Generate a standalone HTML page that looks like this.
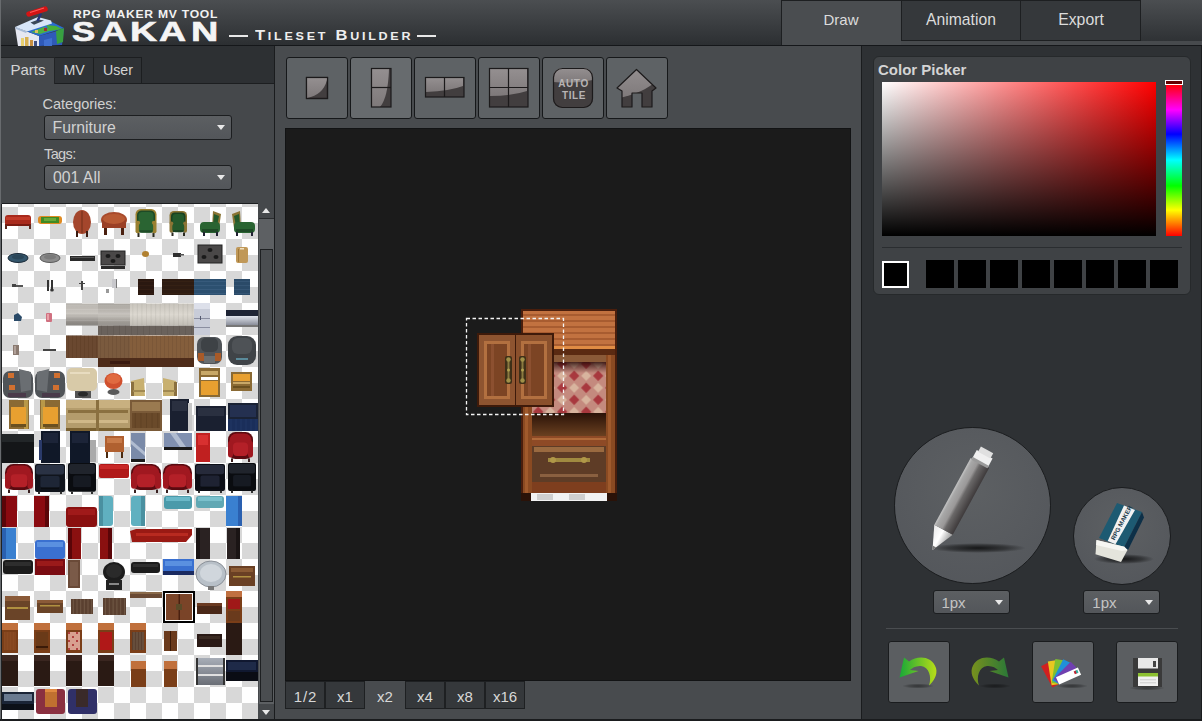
<!DOCTYPE html><html><head><meta charset="utf-8"><style>
*{box-sizing:border-box;margin:0;padding:0}
html,body{width:1202px;height:721px;overflow:hidden;background:#2e3134;font-family:"Liberation Sans",sans-serif;}
.a{position:absolute}
.t{position:absolute;white-space:nowrap;color:#d6d6d6;font-size:14px;line-height:1}
</style></head><body><div class="a" style="left:0px;top:0px;width:1202px;height:45px;background:linear-gradient(#4b4e51,#2c2f32)"></div><div class="a" style="left:0px;top:45px;width:1202px;height:1px;background:#15171a"></div><div class="a" style="left:781px;top:0px;width:120px;height:45px;background:#4a4d50;border-left:1px solid #1d1f21;border-top:1px solid #1d1f21"></div><div class="a" style="left:901px;top:0px;width:120px;height:41px;background:#35383b;border:1px solid #1d1f21"></div><div class="a" style="left:1021px;top:0px;width:120px;height:41px;background:#35383b;border:1px solid #1d1f21;border-left:none"></div><div class="a" style="left:901px;top:41px;width:301px;height:4px;background:#474a4d"></div><div class="t" style="left:781px;top:12.3px;width:120px;text-align:center;font-size:15px;color:#dcdcdc">Draw</div><div class="t" style="left:901px;top:11.7px;width:120px;text-align:center;font-size:15.7px;color:#dcdcdc">Animation</div><div class="t" style="left:1021px;top:11.5px;width:120px;text-align:center;font-size:15.8px;color:#dcdcdc">Export</div><div class="t" style="left:73px;top:9.8px;font-size:10px;font-weight:bold;color:#f2f2f2;letter-spacing:0.6px;transform-origin:0 0;transform:scaleX(1.215)">RPG MAKER MV TOOL</div><div class="t" style="left:72.11px;top:19px;font-size:27px;font-weight:bold;color:#f4f4f4;-webkit-text-stroke:0.6px #f4f4f4;transform-origin:0 0;transform:scaleX(1.29)">S</div><div class="t" style="left:99.51px;top:19px;font-size:27px;font-weight:bold;color:#f4f4f4;-webkit-text-stroke:0.6px #f4f4f4;transform-origin:0 0;transform:scaleX(1.39)">A</div><div class="t" style="left:129.92px;top:19px;font-size:27px;font-weight:bold;color:#f4f4f4;-webkit-text-stroke:0.6px #f4f4f4;transform-origin:0 0;transform:scaleX(1.39)">K</div><div class="t" style="left:159.41px;top:19px;font-size:27px;font-weight:bold;color:#f4f4f4;-webkit-text-stroke:0.6px #f4f4f4;transform-origin:0 0;transform:scaleX(1.39)">A</div><div class="t" style="left:190.5px;top:19px;font-size:27px;font-weight:bold;color:#f4f4f4;-webkit-text-stroke:0.6px #f4f4f4;transform-origin:0 0;transform:scaleX(1.4)">N</div><div class="a" style="left:229px;top:35px;width:19px;height:1.5px;background:#e8e8e8"></div><div class="t" style="left:255px;top:28px;font-size:14.5px;font-weight:bold;color:#eeeeee;letter-spacing:2.4px;transform-origin:0 0;transform:scaleX(1.14)">T<span style="font-size:11px">ILESET</span> B<span style="font-size:11px">UILDER</span></div><div class="a" style="left:417px;top:35px;width:19px;height:1.5px;background:#e8e8e8"></div><svg class="a" style="left:0;top:0" width="70" height="46" viewBox="0 0 70 46"><polygon points="39,36 64,29 62,45 39,46" fill="#2f5ab8"/><polygon points="56,31 64,28 63,42 57,44" fill="#38a040"/><polygon points="44,40 52,38 52,46 44,46" fill="#4070d0"/><polygon points="15,27 39,36 39,46 18,46" fill="#e6e8f2"/><rect x="21" y="38" width="3" height="8" fill="#e8d070"/><rect x="25" y="37" width="3.5" height="9" fill="#d8b050"/><rect x="30" y="40" width="3" height="6" fill="#c89040"/><rect x="34" y="41" width="3" height="5" fill="#405080"/><polygon points="26,31 52,22 64,28 39,36" fill="#2a6cd0"/><polygon points="31,32 44,27 52,30 40,34" fill="#50b040"/><polygon points="46,25 56,26 62,29 50,31" fill="#48b038"/><rect x="44" y="28" width="3" height="3" fill="#a03030"/><rect x="35" y="30" width="3" height="3" fill="#d8c060"/><polygon points="15,27 38,17 51,20.5 52,23.5 27,31.5" fill="#d8e6f8"/><polygon points="15,27 27,31.5 26,33 16,29" fill="#a8bcd8"/><polygon points="30.5,22.5 38.5,19.5 44,20.5 34,24.8" fill="#3a4858"/><line x1="41" y1="13.5" x2="37.5" y2="21" stroke="#26347a" stroke-width="2.5"/><line x1="29" y1="14" x2="45" y2="9" stroke="#d41414" stroke-width="5.5" stroke-linecap="round"/><line x1="30" y1="12.5" x2="44" y2="8" stroke="#ff5a5a" stroke-width="1.2"/></svg><div class="a" style="left:0px;top:0px;width:1px;height:721px;background:#686b6e"></div><div class="a" style="left:1px;top:46px;width:273px;height:38px;background:#2d3033"></div><div class="a" style="left:1px;top:83px;width:273px;height:1px;background:#1c1e20"></div><div class="a" style="left:1px;top:84px;width:273px;height:637px;background:#45484b"></div><div class="a" style="left:1px;top:57px;width:54px;height:27px;background:#45484b;border-top:1px solid #222426;border-right:1px solid #222426"></div><div class="a" style="left:55px;top:57px;width:39px;height:27px;background:#2f3235;border:1px solid #1c1e20;border-left:none"></div><div class="a" style="left:94px;top:57px;width:48px;height:27px;background:#2f3235;border:1px solid #1c1e20;border-left:none"></div><div class="t" style="left:10.5px;top:62.3px;font-size:15px;color:#d4d4d4">Parts</div><div class="t" style="left:63.5px;top:62.8px;font-size:14.2px;color:#d4d4d4">MV</div><div class="t" style="left:103px;top:62.8px;font-size:14.2px;color:#d4d4d4">User</div><div class="t" style="left:42.5px;top:96.9px;font-size:14.5px;color:#d0d0d0">Categories:</div><div class="t" style="left:44px;top:146.9px;font-size:14.5px;color:#d0d0d0;letter-spacing:-0.6px">Tags:</div><div class="a" style="left:44px;top:115px;width:188px;height:25px;background:linear-gradient(#5c5f62,#53565a);border:1px solid #1c1e20;border-radius:3px"></div><div class="t" style="left:52.5px;top:119.9px;font-size:15.8px;color:#d2d2d2">Furniture</div><div class="a" style="left:217px;top:125px;width:0;height:0;border-left:4px solid transparent;border-right:4px solid transparent;border-top:5px solid #e8e8e8"></div><div class="a" style="left:44px;top:165px;width:188px;height:25px;background:linear-gradient(#5c5f62,#53565a);border:1px solid #1c1e20;border-radius:3px"></div><div class="t" style="left:53px;top:169.9px;font-size:15.8px;color:#d2d2d2">001 All</div><div class="a" style="left:217px;top:175px;width:0;height:0;border-left:4px solid transparent;border-right:4px solid transparent;border-top:5px solid #e8e8e8"></div><div class="a" style="left:2px;top:204px;width:256px;height:515px;background:conic-gradient(#fff 25%,#d8d8d8 0 50%,#fff 0 75%,#d8d8d8 0);background-size:32px 32px;background-position:0 3px"></div><svg class="a" style="left:2px;top:204px" width="256" height="515" viewBox="2 204 256 515"><defs><linearGradient id="pg1" x1="0" y1="0" x2="0" y2="1"><stop offset="0" stop-color="#b8b4ae"/><stop offset="0.45" stop-color="#c8c4be"/><stop offset="1" stop-color="#7c7874"/></linearGradient><linearGradient id="pg2" x1="0" y1="0" x2="0" y2="1"><stop offset="0" stop-color="#a8a49e"/><stop offset="0.5" stop-color="#c4c0ba"/><stop offset="1" stop-color="#8e8a84"/></linearGradient><linearGradient id="pg3" x1="0" y1="0" x2="0" y2="1"><stop offset="0" stop-color="#c8c4bc"/><stop offset="0.5" stop-color="#dcd8d0"/><stop offset="1" stop-color="#c0bcb4"/></linearGradient><linearGradient id="pg4" x1="0" y1="0" x2="0" y2="1"><stop offset="0" stop-color="#e0e4ec"/><stop offset="1" stop-color="#8a8e9a"/></linearGradient><linearGradient id="pg5" x1="0" y1="0" x2="0" y2="1"><stop offset="0" stop-color="#a8aeb8"/><stop offset="1" stop-color="#6a6e76"/></linearGradient></defs><rect x="5" y="215" width="26" height="11" rx="3" fill="#a82a1c" /><rect x="6" y="217" width="24" height="3" fill="#c23a28" /><rect x="5" y="224" width="26" height="2" fill="#7a1a10" /><rect x="5" y="225" width="2" height="4" fill="#5a2a20" /><rect x="29" y="225" width="2" height="4" fill="#5a2a20" /><rect x="38" y="216" width="24" height="8" rx="3" fill="#e08a20" /><rect x="41" y="217" width="18" height="6" fill="#3f8a24" /><rect x="44" y="218" width="12" height="3" fill="#6aa838" /><ellipse cx="82" cy="222" rx="9" ry="12" fill="#a4462c" /><rect x="81" y="211" width="2" height="22" fill="#8a3a22" /><rect x="76" y="231" width="2" height="6" fill="#3a1a10" /><rect x="86" y="231" width="2" height="6" fill="#3a1a10" /><ellipse cx="114" cy="220" rx="13" ry="8" fill="#a84a2c" /><rect x="102" y="220" width="24" height="8" fill="#9a4026" /><ellipse cx="114" cy="219" rx="11" ry="5" fill="#b85a34" /><rect x="104" y="228" width="3" height="7" fill="#4a2010" /><rect x="121" y="228" width="3" height="7" fill="#4a2010" /><rect x="135.5" y="209" width="21" height="17.36" rx="5.25" fill="#9a8030" /><rect x="137.0" y="210.5" width="18" height="16.24" rx="4.62" fill="#1e4a26" /><rect x="138.5" y="212" width="15" height="12.6" rx="3.78" fill="#2a6432" /><rect x="135.5" y="220.76" width="4.62" height="12.6" rx="2" fill="#9a8030" /><rect x="151.88" y="220.76" width="4.62" height="12.6" rx="2" fill="#9a8030" /><rect x="138.86" y="223.0" width="14.280000000000001" height="9.799999999999999" rx="3" fill="#2a6432" /><rect x="139.7" y="230.28" width="12.6" height="2.24" fill="#1e4a26" /><rect x="137.5" y="233.07999999999998" width="2" height="3.9200000000000004" fill="#2a2a20" /><rect x="152.5" y="233.07999999999998" width="2" height="3.9200000000000004" fill="#2a2a20" /><rect x="169.5" y="211" width="17.5" height="15.5" rx="4.375" fill="#8a7434" /><rect x="171.0" y="212.5" width="14.5" height="14.499999999999998" rx="3.85" fill="#1a4222" /><rect x="172.5" y="214" width="11.5" height="11.25" rx="3.15" fill="#245a2c" /><rect x="169.5" y="221.5" width="3.85" height="11.25" rx="2" fill="#8a7434" /><rect x="183.15" y="221.5" width="3.85" height="11.25" rx="2" fill="#8a7434" /><rect x="172.3" y="223.5" width="11.9" height="8.75" rx="3" fill="#245a2c" /><rect x="173.0" y="230.0" width="10.5" height="2.0" fill="#1a4222" /><rect x="171.5" y="232.5" width="2" height="3.5000000000000004" fill="#2a2a20" /><rect x="183.0" y="232.5" width="2" height="3.5000000000000004" fill="#2a2a20" /><polygon points="213,211 221,214 219,228 212,228" fill="#8a7434" /><polygon points="214,214 219,216 217,226 213,226" fill="#245a2c" /><rect x="200" y="222" width="20" height="11" rx="4" fill="#2a6432" /><rect x="202" y="229" width="16" height="3" fill="#1e4a26" /><rect x="203" y="232" width="2" height="4" fill="#223" /><rect x="216" y="232" width="2" height="4" fill="#223" /><polygon points="240,211 232,214 234,228 241,228" fill="#8a7434" /><polygon points="239,214 234,216 236,226 240,226" fill="#245a2c" /><rect x="234" y="222" width="21" height="11" rx="4" fill="#2a6432" /><rect x="236" y="229" width="17" height="3" fill="#1e4a26" /><rect x="236" y="232" width="2" height="4" fill="#223" /><rect x="251" y="232" width="2" height="4" fill="#223" /><ellipse cx="18" cy="258" rx="10" ry="4.5" fill="#34566c" stroke="#1a2a38" stroke-width="1"/><ellipse cx="18" cy="257" rx="6" ry="2.5" fill="#2a4658" /><ellipse cx="50" cy="258" rx="10" ry="4.5" fill="#8c8c8c" stroke="#5a5a5a" stroke-width="1"/><ellipse cx="50" cy="257" rx="6" ry="2.5" fill="#7a7a7a" /><rect x="70" y="256" width="25" height="5" fill="#2a2a2a" /><rect x="71" y="257" width="23" height="1" fill="#555" /><rect x="101" y="251" width="24" height="14" fill="#4a4848" stroke="#222" stroke-width="1"/><rect x="101" y="266" width="24" height="3" fill="#2a2a2a" /><ellipse cx="108" cy="256" rx="2.5" ry="2" fill="#1a1a1a" /><ellipse cx="118" cy="256" rx="2.5" ry="2" fill="#1a1a1a" /><ellipse cx="113" cy="261" rx="2.5" ry="2" fill="#1a1a1a" /><ellipse cx="145.5" cy="254" rx="3.5" ry="3" fill="#b08030" /><rect x="173" y="253" width="8" height="4" fill="#303030" /><rect x="180" y="254" width="4" height="1.5" fill="#555" /><rect x="198" y="245" width="24" height="18" fill="#4a4848" stroke="#222" stroke-width="1"/><ellipse cx="210" cy="250" rx="2.5" ry="2" fill="#1a1a1a" /><ellipse cx="204" cy="257" rx="2.5" ry="2" fill="#1a1a1a" /><ellipse cx="216" cy="257" rx="2.5" ry="2" fill="#1a1a1a" /><rect x="236" y="247" width="12" height="16" rx="2" fill="#c09858" /><rect x="240" y="248" width="4" height="1.5" fill="#f0e0c0" /><rect x="238" y="249" width="1" height="13" fill="#a07838" /><rect x="13" y="285" width="10" height="2" fill="#555" /><rect x="12" y="284" width="4" height="3" fill="#444" /><rect x="47" y="280" width="2" height="11" fill="#333" /><rect x="51" y="280" width="2" height="11" fill="#333" /><ellipse cx="52" cy="290" rx="1.8" ry="1.5" fill="#333" /><rect x="81" y="281" width="2" height="9" fill="#444" /><rect x="79" y="283" width="6" height="1" fill="#444" /><rect x="112" y="279" width="5" height="9" fill="#c8c8cc" /><rect x="116" y="279" width="1" height="9" fill="#777" /><rect x="106" y="289" width="3" height="4" fill="#999" /><rect x="138" y="279" width="16" height="16" fill="#2a1810" /><rect x="138" y="281.0" width="16" height="1" fill="#5a3a20" opacity="0.175"/><rect x="138" y="285.0" width="16" height="1" fill="#5a3a20" opacity="0.175"/><rect x="138" y="289.0" width="16" height="1" fill="#5a3a20" opacity="0.175"/><rect x="138" y="293.0" width="16" height="1" fill="#5a3a20" opacity="0.175"/><rect x="162" y="279" width="32" height="16" fill="#2e1c12" /><rect x="162" y="281.0" width="32" height="1" fill="#5a3a22" opacity="0.175"/><rect x="162" y="285.0" width="32" height="1" fill="#5a3a22" opacity="0.175"/><rect x="162" y="289.0" width="32" height="1" fill="#5a3a22" opacity="0.175"/><rect x="162" y="293.0" width="32" height="1" fill="#5a3a22" opacity="0.175"/><rect x="194" y="279" width="32" height="16" fill="#2c5070" /><rect x="194" y="281.0" width="32" height="1" fill="#6a90b0" opacity="0.175"/><rect x="194" y="285.0" width="32" height="1" fill="#6a90b0" opacity="0.175"/><rect x="194" y="289.0" width="32" height="1" fill="#6a90b0" opacity="0.175"/><rect x="194" y="293.0" width="32" height="1" fill="#6a90b0" opacity="0.175"/><rect x="234" y="279" width="16" height="16" fill="#2a4a68" /><rect x="234" y="281.0" width="16" height="1" fill="#6a90b0" opacity="0.175"/><rect x="234" y="285.0" width="16" height="1" fill="#6a90b0" opacity="0.175"/><rect x="234" y="289.0" width="16" height="1" fill="#6a90b0" opacity="0.175"/><rect x="234" y="293.0" width="16" height="1" fill="#6a90b0" opacity="0.175"/><polygon points="14,315 18,313 22,317 21,321 14,321" fill="#2a4a68" /><rect x="46" y="313" width="6" height="9" rx="1" fill="#d07080" /><rect x="47" y="314" width="2" height="6" fill="#e8a0a8" /><rect x="66" y="303.5" width="32" height="22" fill="url(#pg1)" /><rect x="66" y="305.3" width="32" height="1" fill="#ffffff" opacity="0.1"/><rect x="66" y="309.0" width="32" height="1" fill="#ffffff" opacity="0.1"/><rect x="66" y="312.7" width="32" height="1" fill="#ffffff" opacity="0.1"/><rect x="66" y="316.3" width="32" height="1" fill="#ffffff" opacity="0.1"/><rect x="66" y="320.0" width="32" height="1" fill="#ffffff" opacity="0.1"/><rect x="66" y="323.7" width="32" height="1" fill="#ffffff" opacity="0.1"/><rect x="98" y="303.5" width="32" height="22" fill="url(#pg2)" /><rect x="98" y="305.3" width="32" height="1" fill="#ffffff" opacity="0.1"/><rect x="98" y="309.0" width="32" height="1" fill="#ffffff" opacity="0.1"/><rect x="98" y="312.7" width="32" height="1" fill="#ffffff" opacity="0.1"/><rect x="98" y="316.3" width="32" height="1" fill="#ffffff" opacity="0.1"/><rect x="98" y="320.0" width="32" height="1" fill="#ffffff" opacity="0.1"/><rect x="98" y="323.7" width="32" height="1" fill="#ffffff" opacity="0.1"/><rect x="98" y="325.5" width="96" height="9.5" fill="#6a625c" /><rect x="101.0" y="325.5" width="1" height="9.5" fill="#3a3430" opacity="0.15"/><rect x="107.0" y="325.5" width="1" height="9.5" fill="#3a3430" opacity="0.15"/><rect x="113.0" y="325.5" width="1" height="9.5" fill="#3a3430" opacity="0.15"/><rect x="119.0" y="325.5" width="1" height="9.5" fill="#3a3430" opacity="0.15"/><rect x="125.0" y="325.5" width="1" height="9.5" fill="#3a3430" opacity="0.15"/><rect x="131.0" y="325.5" width="1" height="9.5" fill="#3a3430" opacity="0.15"/><rect x="137.0" y="325.5" width="1" height="9.5" fill="#3a3430" opacity="0.15"/><rect x="143.0" y="325.5" width="1" height="9.5" fill="#3a3430" opacity="0.15"/><rect x="149.0" y="325.5" width="1" height="9.5" fill="#3a3430" opacity="0.15"/><rect x="155.0" y="325.5" width="1" height="9.5" fill="#3a3430" opacity="0.15"/><rect x="161.0" y="325.5" width="1" height="9.5" fill="#3a3430" opacity="0.15"/><rect x="167.0" y="325.5" width="1" height="9.5" fill="#3a3430" opacity="0.15"/><rect x="173.0" y="325.5" width="1" height="9.5" fill="#3a3430" opacity="0.15"/><rect x="179.0" y="325.5" width="1" height="9.5" fill="#3a3430" opacity="0.15"/><rect x="185.0" y="325.5" width="1" height="9.5" fill="#3a3430" opacity="0.15"/><rect x="191.0" y="325.5" width="1" height="9.5" fill="#3a3430" opacity="0.15"/><rect x="130" y="303.5" width="64" height="22" fill="url(#pg3)" /><rect x="132.3" y="303.5" width="1" height="22" fill="#8a8680" opacity="0.15"/><rect x="136.9" y="303.5" width="1" height="22" fill="#8a8680" opacity="0.15"/><rect x="141.4" y="303.5" width="1" height="22" fill="#8a8680" opacity="0.15"/><rect x="146.0" y="303.5" width="1" height="22" fill="#8a8680" opacity="0.15"/><rect x="150.6" y="303.5" width="1" height="22" fill="#8a8680" opacity="0.15"/><rect x="155.1" y="303.5" width="1" height="22" fill="#8a8680" opacity="0.15"/><rect x="159.7" y="303.5" width="1" height="22" fill="#8a8680" opacity="0.15"/><rect x="164.3" y="303.5" width="1" height="22" fill="#8a8680" opacity="0.15"/><rect x="168.9" y="303.5" width="1" height="22" fill="#8a8680" opacity="0.15"/><rect x="173.4" y="303.5" width="1" height="22" fill="#8a8680" opacity="0.15"/><rect x="178.0" y="303.5" width="1" height="22" fill="#8a8680" opacity="0.15"/><rect x="182.6" y="303.5" width="1" height="22" fill="#8a8680" opacity="0.15"/><rect x="187.1" y="303.5" width="1" height="22" fill="#8a8680" opacity="0.15"/><rect x="191.7" y="303.5" width="1" height="22" fill="#8a8680" opacity="0.15"/><rect x="194" y="303" width="16" height="32" fill="#c8ccd8" /><rect x="194" y="303" width="16" height="6" fill="#dde0ea" /><rect x="194" y="318" width="16" height="1" fill="#8a8ea0" /><rect x="194" y="327" width="16" height="1" fill="#8a8ea0" /><rect x="200" y="316" width="1" height="4" fill="#555a70" /><rect x="226" y="310" width="32" height="6" fill="#1e2434" /><rect x="226" y="316" width="32" height="9" fill="url(#pg4)" /><rect x="226" y="325" width="32" height="2" fill="#777" /><rect x="13" y="345" width="6" height="10" fill="#8a7a70" /><rect x="14" y="346" width="2" height="8" fill="#b0a098" /><rect x="43" y="349" width="13" height="2" fill="#444" /><rect x="66" y="335.5" width="32" height="22.5" fill="#6a4830" /><rect x="68.0" y="335.5" width="1" height="22.5" fill="#3a2410" opacity="0.15"/><rect x="72.0" y="335.5" width="1" height="22.5" fill="#3a2410" opacity="0.15"/><rect x="76.0" y="335.5" width="1" height="22.5" fill="#3a2410" opacity="0.15"/><rect x="80.0" y="335.5" width="1" height="22.5" fill="#3a2410" opacity="0.15"/><rect x="84.0" y="335.5" width="1" height="22.5" fill="#3a2410" opacity="0.15"/><rect x="88.0" y="335.5" width="1" height="22.5" fill="#3a2410" opacity="0.15"/><rect x="92.0" y="335.5" width="1" height="22.5" fill="#3a2410" opacity="0.15"/><rect x="96.0" y="335.5" width="1" height="22.5" fill="#3a2410" opacity="0.15"/><rect x="98" y="335.5" width="32" height="22.5" fill="#7a5a3e" /><rect x="100.0" y="335.5" width="1" height="22.5" fill="#4a3020" opacity="0.15"/><rect x="104.0" y="335.5" width="1" height="22.5" fill="#4a3020" opacity="0.15"/><rect x="108.0" y="335.5" width="1" height="22.5" fill="#4a3020" opacity="0.15"/><rect x="112.0" y="335.5" width="1" height="22.5" fill="#4a3020" opacity="0.15"/><rect x="116.0" y="335.5" width="1" height="22.5" fill="#4a3020" opacity="0.15"/><rect x="120.0" y="335.5" width="1" height="22.5" fill="#4a3020" opacity="0.15"/><rect x="124.0" y="335.5" width="1" height="22.5" fill="#4a3020" opacity="0.15"/><rect x="128.0" y="335.5" width="1" height="22.5" fill="#4a3020" opacity="0.15"/><rect x="130" y="335.5" width="64" height="22.5" fill="#845e3c" /><rect x="132.0" y="335.5" width="1" height="22.5" fill="#4a3020" opacity="0.15"/><rect x="136.0" y="335.5" width="1" height="22.5" fill="#4a3020" opacity="0.15"/><rect x="140.0" y="335.5" width="1" height="22.5" fill="#4a3020" opacity="0.15"/><rect x="144.0" y="335.5" width="1" height="22.5" fill="#4a3020" opacity="0.15"/><rect x="148.0" y="335.5" width="1" height="22.5" fill="#4a3020" opacity="0.15"/><rect x="152.0" y="335.5" width="1" height="22.5" fill="#4a3020" opacity="0.15"/><rect x="156.0" y="335.5" width="1" height="22.5" fill="#4a3020" opacity="0.15"/><rect x="160.0" y="335.5" width="1" height="22.5" fill="#4a3020" opacity="0.15"/><rect x="164.0" y="335.5" width="1" height="22.5" fill="#4a3020" opacity="0.15"/><rect x="168.0" y="335.5" width="1" height="22.5" fill="#4a3020" opacity="0.15"/><rect x="172.0" y="335.5" width="1" height="22.5" fill="#4a3020" opacity="0.15"/><rect x="176.0" y="335.5" width="1" height="22.5" fill="#4a3020" opacity="0.15"/><rect x="180.0" y="335.5" width="1" height="22.5" fill="#4a3020" opacity="0.15"/><rect x="184.0" y="335.5" width="1" height="22.5" fill="#4a3020" opacity="0.15"/><rect x="188.0" y="335.5" width="1" height="22.5" fill="#4a3020" opacity="0.15"/><rect x="192.0" y="335.5" width="1" height="22.5" fill="#4a3020" opacity="0.15"/><rect x="98" y="358" width="96" height="9" fill="#4e2c1a" /><rect x="110" y="361" width="20" height="3" fill="#3a1a10" /><rect x="197" y="337" width="25" height="27" rx="7" fill="#505458" /><rect x="201" y="338" width="17" height="14" rx="5" fill="#3e4246" /><rect x="198" y="353" width="6" height="8" fill="#a85a28" /><rect x="215" y="353" width="6" height="8" fill="#a85a28" /><rect x="204" y="356" width="11" height="7" fill="#6a6e70" /><rect x="228" y="336" width="28" height="29" rx="9" fill="#404448" /><rect x="232" y="338" width="20" height="16" rx="6" fill="#4e5256" /><rect x="236" y="358" width="12" height="2" fill="#5a8a9a" /><rect x="3" y="371" width="30" height="27" rx="7" fill="#505458" /><polygon points="19,369 31,372 31,390 21,392" fill="#6a6e72" /><rect x="8" y="373" width="6" height="5" fill="#d07030" /><rect x="9" y="385" width="6" height="5" fill="#d07030" /><rect x="8" y="393" width="18" height="4" fill="#4a3a4a" /><rect x="35" y="371" width="30" height="27" rx="7" fill="#505458" /><polygon points="49,369 37,372 37,390 47,392" fill="#6a6e72" /><rect x="54" y="373" width="6" height="5" fill="#d07030" /><rect x="53" y="385" width="6" height="5" fill="#d07030" /><rect x="42" y="393" width="18" height="4" fill="#4a3a4a" /><rect x="67" y="368" width="30" height="23" rx="5" fill="#d8caa8" /><rect x="70" y="372" width="20" height="2" fill="#e8dcc0" /><rect x="75" y="391" width="16" height="7" fill="#555" /><ellipse cx="83" cy="394" rx="5" ry="2.5" fill="#2a2a2a" /><ellipse cx="113.5" cy="381" rx="9" ry="8" fill="#d0502e" /><ellipse cx="113.5" cy="379" rx="7" ry="5" fill="#e06a40" /><ellipse cx="113.5" cy="392" rx="6" ry="3" fill="#5a5a5a" /><polygon points="131,381 144,378 145,396 131,396" fill="#c8b070" /><rect x="131" y="382" width="3" height="14" fill="#8a7040" /><rect x="133" y="390" width="12" height="2" fill="#a08850" /><polygon points="176,381 163,378 163,396 176,396" fill="#c8b070" /><rect x="174" y="382" width="3" height="14" fill="#8a7040" /><rect x="163" y="390" width="12" height="2" fill="#a08850" /><rect x="199" y="368" width="21" height="29" fill="#8a6a34" /><rect x="201" y="371" width="17" height="4" fill="#c8a868" /><rect x="201" y="377" width="17" height="3" fill="#fff" /><rect x="201" y="381" width="17" height="14" fill="#e8a030" /><rect x="231" y="372" width="21" height="19" fill="#8a6a34" /><rect x="233" y="374" width="17" height="7" fill="#e8a030" /><rect x="233" y="382" width="17" height="2" fill="#c8a868" /><rect x="233" y="386" width="17" height="2" fill="#6a5020" /><rect x="9" y="400" width="20" height="29" fill="#8a6a34" /><rect x="24" y="400" width="4" height="29" fill="#b89848" /><rect x="11" y="407" width="15" height="17" fill="#e8a030" /><rect x="11" y="424" width="15" height="3" fill="#6a5020" /><rect x="40" y="400" width="20" height="29" fill="#8a6a34" /><rect x="41" y="400" width="4" height="29" fill="#b89848" /><rect x="43" y="407" width="15" height="17" fill="#e8a030" /><rect x="43" y="424" width="15" height="3" fill="#6a5020" /><rect x="66" y="400" width="64" height="31" fill="#b49c6c" /><rect x="66" y="400" width="64" height="8" fill="#c8b080" /><rect x="68" y="410" width="60" height="3" fill="#8a7040" /><rect x="68" y="420" width="60" height="3" fill="#d0b888" /><rect x="66" y="428" width="64" height="3" fill="#7a6030" /><rect x="96" y="400" width="3" height="31" fill="#8a7040" /><rect x="130" y="400" width="32" height="31" fill="#7a5a38" /><rect x="132" y="402" width="28" height="9" fill="#9a7a50" /><rect x="132" y="413" width="28" height="15" fill="#6a4a2a" /><rect x="134.8" y="413" width="1" height="15" fill="#3a2210" opacity="0.2"/><rect x="140.4" y="413" width="1" height="15" fill="#3a2210" opacity="0.2"/><rect x="146.0" y="413" width="1" height="15" fill="#3a2210" opacity="0.2"/><rect x="151.6" y="413" width="1" height="15" fill="#3a2210" opacity="0.2"/><rect x="157.2" y="413" width="1" height="15" fill="#3a2210" opacity="0.2"/><rect x="170" y="399" width="19" height="32" fill="#1a2030" /><rect x="172" y="401" width="15" height="10" fill="#2a3040" /><rect x="188" y="403" width="4" height="28" fill="#c8c8c8" /><rect x="196" y="406" width="30" height="25" fill="#1a2030" /><rect x="198" y="408" width="26" height="8" fill="#2a3040" /><rect x="228" y="403" width="30" height="28" fill="#1a2234" /><rect x="230" y="405" width="26" height="12" fill="#243050" /><rect x="228" y="419" width="30" height="12" fill="#1a2e5a" /><rect x="230.5" y="419" width="1" height="12" fill="#4a6aaa" opacity="0.15"/><rect x="235.5" y="419" width="1" height="12" fill="#4a6aaa" opacity="0.15"/><rect x="240.5" y="419" width="1" height="12" fill="#4a6aaa" opacity="0.15"/><rect x="245.5" y="419" width="1" height="12" fill="#4a6aaa" opacity="0.15"/><rect x="250.5" y="419" width="1" height="12" fill="#4a6aaa" opacity="0.15"/><rect x="255.5" y="419" width="1" height="12" fill="#4a6aaa" opacity="0.15"/><rect x="2" y="434" width="32" height="29" fill="#141618" /><rect x="2" y="434" width="32" height="8" fill="#222628" /><rect x="41" y="431" width="19" height="32" fill="#101828" /><rect x="39" y="440" width="3" height="20" fill="#2a3a6a" /><rect x="43" y="433" width="15" height="10" fill="#1c2438" /><rect x="70" y="431" width="20" height="32" fill="#101828" /><rect x="72" y="433" width="16" height="10" fill="#1c2438" /><rect x="90" y="440" width="6" height="22" fill="#aaaaaa" /><rect x="105" y="436" width="19" height="16" fill="#b06030" /><rect x="107" y="438" width="15" height="5" fill="#c87a48" /><rect x="106" y="452" width="2" height="6" fill="#4a2a10" /><rect x="121" y="452" width="2" height="6" fill="#4a2a10" /><rect x="131" y="433" width="14" height="29" fill="#7a8aa8" /><polygon points="131,440 145,452 145,456 131,444" fill="#b0bcd0" /><rect x="131" y="459" width="14" height="3" fill="#1a1a1a" /><rect x="164" y="433" width="28" height="14" fill="#8090b0" /><polygon points="170,433 176,433 186,447 180,447" fill="#b0bcd0" /><rect x="164" y="447" width="28" height="3" fill="#1a1a1a" /><rect x="196" y="433" width="14" height="29" fill="#c02020" /><rect x="198" y="435" width="10" height="10" fill="#d83030" /><rect x="228" y="432" width="25" height="27.0" rx="7.5" fill="#5a0a10" /><rect x="229.5" y="433.5" width="22" height="16.5" rx="7.000000000000001" fill="#a01820" /><rect x="233.0" y="442.5" width="15.0" height="13.5" rx="4" fill="#b42028" /><rect x="228" y="441.0" width="5.0" height="16.5" rx="3" fill="#a01820" /><rect x="248.0" y="441.0" width="5.0" height="16.5" rx="3" fill="#a01820" /><rect x="231" y="458.4" width="2" height="3.5999999999999996" fill="#3a2020" /><rect x="248" y="458.4" width="2" height="3.5999999999999996" fill="#3a2020" /><rect x="5" y="464" width="28" height="26.1" rx="8.4" fill="#5a0a10" /><rect x="6.5" y="465.5" width="25" height="15.950000000000001" rx="7.840000000000001" fill="#a01820" /><rect x="10.600000000000001" y="474.15" width="16.8" height="13.05" rx="4" fill="#b42028" /><rect x="5" y="472.7" width="5.6000000000000005" height="15.950000000000001" rx="3" fill="#a01820" /><rect x="27.400000000000002" y="472.7" width="5.6000000000000005" height="15.950000000000001" rx="3" fill="#a01820" /><rect x="8" y="489.52" width="2" height="3.48" fill="#3a2020" /><rect x="28" y="489.52" width="2" height="3.48" fill="#3a2020" /><rect x="35" y="464" width="30" height="27.900000000000002" rx="2" fill="#10141c" /><rect x="36" y="465" width="28" height="9.6" rx="2" fill="#2a3244" /><rect x="40.4" y="476.0" width="19.2" height="12.0" rx="2" fill="#1e2636" /><rect x="41.0" y="487.4" width="18.0" height="1.7999999999999998" fill="#0a0c10" /><rect x="38" y="491.6" width="2" height="2.4" fill="#333" /><rect x="60" y="491.6" width="2" height="2.4" fill="#333" /><rect x="68" y="463" width="28" height="28.830000000000002" rx="2" fill="#0a0c10" /><rect x="69" y="464" width="26" height="9.92" rx="2" fill="#20242c" /><rect x="73.04" y="475.4" width="17.92" height="12.4" rx="2" fill="#161a22" /><rect x="73.6" y="487.18" width="16.8" height="1.8599999999999999" fill="#0a0c10" /><rect x="71" y="491.52" width="2" height="2.48" fill="#333" /><rect x="91" y="491.52" width="2" height="2.48" fill="#333" /><rect x="99" y="464" width="30" height="14" rx="2" fill="#b01818" /><rect x="100" y="465" width="28" height="4" fill="#c82828" /><rect x="131" y="464" width="30" height="26.1" rx="9.0" fill="#5a0a10" /><rect x="132.5" y="465.5" width="27" height="15.950000000000001" rx="8.4" fill="#a01820" /><rect x="137.0" y="474.15" width="18.0" height="13.05" rx="4" fill="#b42028" /><rect x="131" y="472.7" width="6.0" height="15.950000000000001" rx="3" fill="#a01820" /><rect x="155.0" y="472.7" width="6.0" height="15.950000000000001" rx="3" fill="#a01820" /><rect x="134" y="489.52" width="2" height="3.48" fill="#3a2020" /><rect x="156" y="489.52" width="2" height="3.48" fill="#3a2020" /><rect x="163" y="464" width="29" height="26.1" rx="8.7" fill="#5a0a10" /><rect x="164.5" y="465.5" width="26" height="15.950000000000001" rx="8.120000000000001" fill="#a01820" /><rect x="168.8" y="474.15" width="17.4" height="13.05" rx="4" fill="#b42028" /><rect x="163" y="472.7" width="5.800000000000001" height="15.950000000000001" rx="3" fill="#a01820" /><rect x="186.2" y="472.7" width="5.800000000000001" height="15.950000000000001" rx="3" fill="#a01820" /><rect x="166" y="489.52" width="2" height="3.48" fill="#3a2020" /><rect x="187" y="489.52" width="2" height="3.48" fill="#3a2020" /><rect x="195" y="464" width="30" height="26.970000000000002" rx="2" fill="#0c0e16" /><rect x="196" y="465" width="28" height="9.28" rx="2" fill="#262a3a" /><rect x="200.4" y="475.6" width="19.2" height="11.600000000000001" rx="2" fill="#1e2232" /><rect x="201.0" y="486.62" width="18.0" height="1.74" fill="#0a0c10" /><rect x="198" y="490.68" width="2" height="2.32" fill="#333" /><rect x="220" y="490.68" width="2" height="2.32" fill="#333" /><rect x="228" y="463" width="28" height="27.900000000000002" rx="2" fill="#0a0c10" /><rect x="229" y="464" width="26" height="9.6" rx="2" fill="#20242c" /><rect x="233.04" y="475.0" width="17.92" height="12.0" rx="2" fill="#161a22" /><rect x="233.6" y="486.4" width="16.8" height="1.7999999999999998" fill="#0a0c10" /><rect x="231" y="490.6" width="2" height="2.4" fill="#333" /><rect x="251" y="490.6" width="2" height="2.4" fill="#333" /><rect x="2" y="496" width="15" height="31" fill="#8a0a10" /><rect x="2" y="496" width="4" height="31" fill="#5a0508" /><rect x="34" y="496" width="15" height="31" fill="#8a0a10" /><rect x="45" y="496" width="4" height="31" fill="#5a0508" /><rect x="66" y="507" width="31" height="20" rx="3" fill="#8a1010" /><rect x="68" y="509" width="27" height="6" fill="#a01a1a" /><rect x="99" y="496" width="14" height="30" rx="3" fill="#60b0c0" /><rect x="99" y="496" width="4" height="30" fill="#4a90a0" /><rect x="131" y="496" width="14" height="30" rx="3" fill="#60b0c0" /><rect x="141" y="496" width="4" height="30" fill="#4a90a0" /><rect x="164" y="496" width="28" height="13" rx="3" fill="#4a9aaa" /><rect x="166" y="497" width="24" height="4" fill="#6ab8c8" /><rect x="196" y="496" width="28" height="12" rx="3" fill="#60a8b4" /><rect x="198" y="497" width="24" height="4" fill="#7ac0cc" /><rect x="226" y="496" width="16" height="30" fill="#3a80d0" /><rect x="238" y="496" width="4" height="30" fill="#2a60b0" /><rect x="2" y="528" width="14" height="31" fill="#3a80d0" /><rect x="2" y="528" width="4" height="31" fill="#2a60b0" /><rect x="35" y="540" width="30" height="19" rx="3" fill="#3a70d0" /><rect x="37" y="542" width="26" height="5" fill="#5a90e0" /><rect x="68" y="528" width="13" height="31" fill="#8a1010" /><rect x="68" y="528" width="4" height="31" fill="#5a0508" /><rect x="100" y="528" width="12" height="31" fill="#8a1010" /><rect x="108" y="528" width="4" height="31" fill="#5a0508" /><polygon points="130,531 136,529 192,529 192,535 186,542 132,542" fill="#9a1a14" /><rect x="136" y="533" width="52" height="3" fill="#b82a20" /><rect x="196" y="528" width="14" height="31" fill="#2a2222" /><rect x="196" y="528" width="4" height="31" fill="#1a1414" /><rect x="227" y="528" width="13" height="31" fill="#2a2222" /><rect x="236" y="528" width="4" height="31" fill="#1a1414" /><rect x="3" y="560" width="30" height="14" rx="3" fill="#1c1c1c" /><rect x="5" y="562" width="26" height="4" fill="#2e2e2e" /><rect x="35" y="559" width="30" height="16" fill="#7a0c12" /><rect x="37" y="561" width="26" height="5" fill="#9a1a1a" /><rect x="68" y="560" width="12" height="28" fill="#6a4a38" /><rect x="70" y="562" width="8" height="24" fill="#7a5a48" /><ellipse cx="114" cy="572" rx="11" ry="10" fill="#1c1c1c" /><ellipse cx="114" cy="571" rx="8" ry="7" fill="#2a2a2a" /><rect x="106" y="580" width="16" height="10" fill="#222" /><rect x="109" y="583" width="10" height="2" fill="#888" /><rect x="131" y="562" width="29" height="11" rx="3" fill="#1c1c1c" /><rect x="133" y="564" width="25" height="3" fill="#2e2e2e" /><rect x="163" y="559" width="31" height="16" fill="#3a70d0" /><rect x="165" y="561" width="27" height="5" fill="#5a90e0" /><rect x="163" y="571" width="31" height="4" fill="#1a2a60" /><ellipse cx="211" cy="574" rx="15" ry="13" fill="#b8c0c8" stroke="#8a9098" stroke-width="1"/><ellipse cx="211" cy="573" rx="11" ry="9" fill="#d0d6dc" /><rect x="208" y="586" width="6" height="4" fill="#777" /><rect x="229" y="566" width="26" height="20" fill="#6a4024" /><rect x="231" y="568" width="22" height="4" fill="#8a5a34" /><rect x="233" y="576" width="18" height="1.5" fill="#b09040" /><rect x="5" y="596" width="25" height="24" fill="#6a4428" /><rect x="5" y="596" width="25" height="5" fill="#8a5a38" /><rect x="7" y="607" width="21" height="2" fill="#b09040" /><rect x="37" y="600" width="26" height="13" fill="#6a4428" /><rect x="37" y="600" width="26" height="3" fill="#8a5a38" /><rect x="40" y="605" width="20" height="1.5" fill="#b09040" /><rect x="71" y="599" width="22" height="15" fill="#5a4030" /><rect x="72.8" y="599" width="1" height="15" fill="#d0c0a0" opacity="0.2"/><rect x="76.5" y="599" width="1" height="15" fill="#d0c0a0" opacity="0.2"/><rect x="80.2" y="599" width="1" height="15" fill="#d0c0a0" opacity="0.2"/><rect x="83.8" y="599" width="1" height="15" fill="#d0c0a0" opacity="0.2"/><rect x="87.5" y="599" width="1" height="15" fill="#d0c0a0" opacity="0.2"/><rect x="91.2" y="599" width="1" height="15" fill="#d0c0a0" opacity="0.2"/><rect x="103" y="598" width="23" height="17" fill="#5a4030" /><rect x="104.9" y="598" width="1" height="17" fill="#d0c0a0" opacity="0.2"/><rect x="108.8" y="598" width="1" height="17" fill="#d0c0a0" opacity="0.2"/><rect x="112.6" y="598" width="1" height="17" fill="#d0c0a0" opacity="0.2"/><rect x="116.4" y="598" width="1" height="17" fill="#d0c0a0" opacity="0.2"/><rect x="120.2" y="598" width="1" height="17" fill="#d0c0a0" opacity="0.2"/><rect x="124.1" y="598" width="1" height="17" fill="#d0c0a0" opacity="0.2"/><rect x="130" y="592" width="32" height="6" fill="#6a4a34" /><rect x="130" y="592" width="32" height="2" fill="#8a6a4a" /><rect x="163" y="591" width="32" height="32" fill="#000" /><rect x="165" y="593" width="28" height="28" fill="#fff" /><rect x="166" y="594" width="26" height="26" fill="#7a4428" /><rect x="178.5" y="594" width="1.5" height="26" fill="#4a2010" /><rect x="176" y="604" width="6" height="6" fill="#5a4a28" /><rect x="197" y="603" width="25" height="11" fill="#4a2818" /><rect x="197" y="603" width="25" height="3" fill="#6a3a22" /><rect x="226" y="591" width="16" height="32" fill="#7a3e18" /><rect x="226" y="591" width="16" height="6" fill="#c07040" /><rect x="228" y="599" width="12" height="10" fill="#a01818" /><rect x="228" y="611" width="12" height="10" fill="#6a3a1c" /><rect x="2" y="623" width="16" height="7" fill="#c0703c" /><rect x="2" y="630" width="16" height="23" fill="#7a3e18" /><rect x="2" y="653" width="16" height="2" fill="#f0f0f0" /><rect x="34" y="623" width="16" height="7" fill="#c0703c" /><rect x="34" y="630" width="16" height="23" fill="#7a3e18" /><rect x="34" y="653" width="16" height="2" fill="#f0f0f0" /><rect x="66" y="623" width="16" height="7" fill="#c0703c" /><rect x="66" y="630" width="16" height="23" fill="#7a3e18" /><rect x="66" y="653" width="16" height="2" fill="#f0f0f0" /><rect x="98" y="623" width="16" height="7" fill="#c0703c" /><rect x="98" y="630" width="16" height="23" fill="#7a3e18" /><rect x="98" y="653" width="16" height="2" fill="#f0f0f0" /><rect x="130" y="623" width="16" height="7" fill="#c0703c" /><rect x="130" y="630" width="16" height="23" fill="#7a3e18" /><rect x="130" y="653" width="16" height="2" fill="#f0f0f0" /><rect x="4" y="632" width="12" height="18" fill="#8a4a22" /><rect x="5.5" y="632" width="1" height="18" fill="#5a2a10" opacity="0.2"/><rect x="8.5" y="632" width="1" height="18" fill="#5a2a10" opacity="0.2"/><rect x="11.5" y="632" width="1" height="18" fill="#5a2a10" opacity="0.2"/><rect x="14.5" y="632" width="1" height="18" fill="#5a2a10" opacity="0.2"/><rect x="36" y="632" width="12" height="18" fill="#6a3a18" /><rect x="36" y="646" width="12" height="2" fill="#3a1a08" /><rect x="68" y="632" width="12" height="18" fill="#d8a090" /><rect x="68" y="632" width="2" height="2" fill="#b04040" /><rect x="76" y="632" width="2" height="2" fill="#b04040" /><rect x="72" y="636" width="2" height="2" fill="#b04040" /><rect x="68" y="640" width="2" height="2" fill="#b04040" /><rect x="76" y="640" width="2" height="2" fill="#b04040" /><rect x="72" y="644" width="2" height="2" fill="#b04040" /><rect x="68" y="648" width="2" height="2" fill="#b04040" /><rect x="76" y="648" width="2" height="2" fill="#b04040" /><rect x="100" y="632" width="12" height="18" fill="#b01818" /><rect x="132" y="632" width="12" height="18" fill="#5a4030" /><rect x="133.5" y="632" width="1" height="18" fill="#c0b090" opacity="0.25"/><rect x="136.5" y="632" width="1" height="18" fill="#c0b090" opacity="0.25"/><rect x="139.5" y="632" width="1" height="18" fill="#c0b090" opacity="0.25"/><rect x="142.5" y="632" width="1" height="18" fill="#c0b090" opacity="0.25"/><rect x="164" y="631" width="13" height="20" fill="#6a3a1c" /><rect x="170" y="631" width="1" height="20" fill="#3a1a08" /><rect x="197" y="634" width="25" height="13" fill="#2a1a16" /><rect x="199" y="636" width="21" height="3" fill="#3a2a22" /><rect x="226" y="623" width="16" height="32" fill="#2a1a14" /><rect x="2" y="655" width="16" height="31" fill="#2a1a14" /><rect x="2" y="655" width="16" height="6" fill="#3a2620" /><rect x="34" y="655" width="16" height="31" fill="#2a1a14" /><rect x="34" y="655" width="16" height="6" fill="#3a2620" /><rect x="66" y="655" width="16" height="31" fill="#2a1a14" /><rect x="66" y="655" width="16" height="6" fill="#3a2620" /><rect x="98" y="655" width="16" height="31" fill="#2a1a14" /><rect x="98" y="655" width="16" height="6" fill="#3a2620" /><rect x="131" y="661" width="15" height="26" fill="#7a3e18" /><rect x="131" y="661" width="15" height="8" fill="#c0703c" /><rect x="164" y="661" width="13" height="26" fill="#7a3e18" /><rect x="164" y="661" width="13" height="8" fill="#c0703c" /><rect x="196" y="658" width="29" height="27" fill="url(#pg5)" /><rect x="196" y="658" width="2" height="27" fill="#333" /><rect x="223" y="658" width="2" height="27" fill="#333" /><rect x="198" y="665" width="25" height="2" fill="#e0e0e0" /><rect x="198" y="674" width="25" height="2" fill="#e0e0e0" /><rect x="226" y="660" width="32" height="21" fill="#101830" /><rect x="228" y="662" width="28" height="8" fill="#1e2a48" /><rect x="226" y="672" width="32" height="9" fill="#0a0c14" /><rect x="2" y="692" width="32" height="18" fill="#1a2436" /><rect x="4" y="694" width="28" height="7" fill="#6a7a90" /><rect x="2" y="704" width="32" height="6" fill="#0c1018" /><rect x="36" y="689" width="29" height="25" rx="3" fill="#8a3040" /><rect x="45" y="689" width="12" height="18" fill="#c07030" /><rect x="45" y="689" width="12" height="3" fill="#e08a40" /><rect x="68" y="689" width="29" height="25" rx="3" fill="#303068" /><rect x="76" y="689" width="12" height="18" fill="#3a2a2a" /></svg><div class="a" style="left:2px;top:203px;width:256px;height:1px;background:#1c1e20"></div><div class="a" style="left:258px;top:203px;width:16px;height:516px;background:#45484b"></div><div class="a" style="left:259px;top:204px;width:15px;height:15px;background:#45484b;border-bottom:1px solid #2a2c2e"></div><div class="a" style="left:262px;top:208px;width:0;height:0;border-left:4px solid transparent;border-right:4px solid transparent;border-bottom:5px solid #e8e8e8"></div><div class="a" style="left:259px;top:219px;width:15px;height:485px;background:#5d6063"></div><div class="a" style="left:260px;top:249px;width:13px;height:453px;background:#4a4d50;border:1px solid #1e2022"></div><div class="a" style="left:259px;top:704px;width:15px;height:15px;background:#45484b"></div><div class="a" style="left:262px;top:710px;width:0;height:0;border-left:4px solid transparent;border-right:4px solid transparent;border-top:5px solid #e8e8e8"></div><div class="a" style="left:0px;top:719px;width:275px;height:2px;background:#1a1c1e"></div><div class="a" style="left:1px;top:204px;width:1px;height:517px;background:#202224"></div><div class="a" style="left:274px;top:46px;width:1px;height:675px;background:#1a1c1e"></div><div class="a" style="left:275px;top:46px;width:586px;height:675px;background:#484b4e"></div><div class="a" style="left:286px;top:57px;width:62px;height:62px;background:#5e6265;border:1px solid #16181a;border-radius:3px"></div><div class="a" style="left:350px;top:57px;width:62px;height:62px;background:#676b6e;border:1px solid #16181a;border-radius:3px"></div><div class="a" style="left:414px;top:57px;width:62px;height:62px;background:#5e6265;border:1px solid #16181a;border-radius:3px"></div><div class="a" style="left:478px;top:57px;width:62px;height:62px;background:#5e6265;border:1px solid #16181a;border-radius:3px"></div><div class="a" style="left:542px;top:57px;width:62px;height:62px;background:#5e6265;border:1px solid #16181a;border-radius:3px"></div><div class="a" style="left:606px;top:57px;width:62px;height:62px;background:#5e6265;border:1px solid #16181a;border-radius:3px"></div><svg class="a" style="left:0;top:0" width="700" height="130" viewBox="0 0 700 130"><defs>
<linearGradient id="gl" x1="0" y1="0" x2="0" y2="1"><stop offset="0" stop-color="#948f90"/><stop offset="1" stop-color="#7e797a"/></linearGradient>
</defs><rect x="306.5" y="77.5" width="21" height="21" fill="#423e3f" stroke="#1c1a1b" stroke-width="1.2"/><path d="M307 78 H327 V80 Q323 95 307 98 Z" fill="url(#gl)"/><rect x="306.5" y="77.5" width="21" height="21" fill="none" stroke="#1c1a1b" stroke-width="1.2"/><rect x="371.5" y="68.5" width="19.5" height="38.5" fill="#423e3f"/><path d="M372 69 H389 Q388 98 380 107 H372 Z" fill="url(#gl)"/><rect x="371.5" y="68.5" width="19.5" height="38.5" fill="none" stroke="#1c1a1b" stroke-width="1.2"/><line x1="371.5" y1="87.5" x2="391" y2="87.5" stroke="#1c1a1b" stroke-width="1.2"/><rect x="425.5" y="77.5" width="38.5" height="19.5" fill="#423e3f"/><path d="M426 78 H463 V86 Q450 91 426 92 Z" fill="url(#gl)"/><rect x="425.5" y="77.5" width="38.5" height="19.5" fill="none" stroke="#1c1a1b" stroke-width="1.2"/><line x1="444.5" y1="77.5" x2="444.5" y2="97" stroke="#1c1a1b" stroke-width="1.2"/><rect x="489.5" y="68.5" width="38.5" height="38.5" fill="#423e3f"/><path d="M490 69 H527 V91 Q512 96 490 96 Z" fill="url(#gl)"/><rect x="489.5" y="68.5" width="38.5" height="38.5" fill="none" stroke="#1c1a1b" stroke-width="1.2"/><line x1="508.5" y1="68.5" x2="508.5" y2="107" stroke="#1c1a1b" stroke-width="1.2"/><line x1="489.5" y1="87.5" x2="528" y2="87.5" stroke="#1c1a1b" stroke-width="1.2"/><clipPath id="ca"><rect x="553" y="68" width="40" height="40" rx="9"/></clipPath><g clip-path="url(#ca)"><rect x="553" y="68" width="40" height="40" fill="#423e3f"/><path d="M553 68 H593 V80 Q575 84 553 82 Z" fill="url(#gl)"/></g><rect x="553.5" y="68.5" width="39" height="39" rx="9" fill="none" stroke="#1c1a1b" stroke-width="1.2"/><text x="573.5" y="87" text-anchor="middle" font-family="Liberation Sans" font-weight="bold" font-size="10" letter-spacing="0.6" fill="#b8b4b4">AUTO</text><text x="574" y="99" text-anchor="middle" font-family="Liberation Sans" font-weight="bold" font-size="10" letter-spacing="0.6" fill="#b8b4b4">TILE</text><clipPath id="ch"><path d="M636.5 69.5 L656 88 L652 91 V107 H642 V93 H632 V107 H622 V91 L617 88 Z"/></clipPath><g clip-path="url(#ch)"><rect x="615" y="67" width="45" height="42" fill="#423e3f"/><path d="M615 67 H660 V76 Q650 92 615 99 Z" fill="url(#gl)"/></g><path d="M636.5 69.5 L656 88 L652 91 V107 H642 V93 H632 V107 H622 V91 L617 88 Z" fill="none" stroke="#1c1a1b" stroke-width="1.2" stroke-linejoin="round"/></svg><div class="a" style="left:285px;top:128px;width:566px;height:553px;background:#1b1b1b;border:1px solid #121314"></div><svg class="a" style="left:0;top:0" width="700" height="520" viewBox="0 0 700 520"><defs>
<pattern id="chk" x="550.2" y="351.8" width="24" height="24" patternUnits="userSpaceOnUse">
<rect width="24" height="24" fill="#c48a7e"/><polygon points="0,-5.2 5.2,0 0,5.2 -5.2,0" fill="#a8383e"/><polygon points="24,-5.2 29.2,0 24,5.2 18.8,0" fill="#a8383e"/><polygon points="0,18.8 5.2,24 0,29.2 -5.2,24" fill="#a8383e"/><polygon points="24,18.8 29.2,24 24,29.2 18.8,24" fill="#a8383e"/><polygon points="12,6.8 17.2,12 12,17.2 6.8,12" fill="#a8383e"/><polygon points="12,-5 17,0 12,5 7,0" fill="#d8b49e"/><polygon points="0,7 5,12 0,17 -5,12" fill="#d8b49e"/><polygon points="24,7 29,12 24,17 19,12" fill="#d8b49e"/><polygon points="12,19 17,24 12,29 7,24" fill="#d8b49e"/>
</pattern>
<linearGradient id="clsh" x1="0" y1="0" x2="0" y2="1"><stop offset="0" stop-color="#2a0a08" stop-opacity="0.85"/><stop offset="1" stop-color="#2a0a08" stop-opacity="0"/></linearGradient>
<pattern id="slat" x="0" y="311" width="10" height="6" patternUnits="userSpaceOnUse">
<rect width="10" height="6" fill="#c27240"/><rect y="3" width="10" height="2" fill="#a85c30"/>
</pattern>
<linearGradient id="shelf" x1="0" y1="0" x2="0" y2="1"><stop offset="0" stop-color="#2a1208"/><stop offset="1" stop-color="#6a4020"/></linearGradient>
</defs><rect x="521" y="309" width="96" height="185" fill="#4a1e0c"/><rect x="523" y="311" width="92" height="37" fill="url(#slat)"/><rect x="523" y="346" width="92" height="3" fill="#e08c44"/><rect x="523" y="349" width="92" height="6" fill="#5a2a12"/><rect x="523" y="355" width="9" height="138" fill="#8a4a22"/><rect x="606" y="355" width="9" height="138" fill="#8a4a22"/><rect x="525" y="355" width="3" height="138" fill="#a05a2c"/><rect x="608" y="355" width="3" height="138" fill="#a05a2c"/><rect x="532" y="355" width="74" height="8" fill="#8a5a38"/><rect x="532" y="362" width="74" height="51" fill="url(#chk)"/><rect x="532" y="362" width="74" height="11" fill="url(#clsh)"/><rect x="532" y="413" width="74" height="23" fill="url(#shelf)"/><rect x="532" y="436" width="74" height="10" fill="#8e4a26"/><rect x="532" y="438" width="74" height="2" fill="#b06a3a"/><rect x="532" y="446" width="74" height="36" fill="#5e3c26"/><rect x="534" y="447" width="70" height="5" fill="#9a6a40"/><rect x="548" y="458" width="42" height="4" fill="#a08a40"/><circle cx="553" cy="460" r="3" fill="#b09848"/><circle cx="584" cy="460" r="3" fill="#b09848"/><rect x="540" y="474" width="58" height="3" fill="#8a6040"/><rect x="532" y="482" width="74" height="11" fill="#7e3e1e"/><rect x="521" y="493" width="11" height="8" fill="#2a1208"/><rect x="606" y="493" width="11" height="8" fill="#2a1208"/><rect x="531" y="493" width="76" height="8" fill="#f2f2f2"/><rect x="537" y="494" width="16" height="6" fill="#cfcfcf"/><rect x="569" y="494" width="16" height="6" fill="#cfcfcf"/><rect x="477" y="333" width="77" height="74" fill="#3e1a0a"/><rect x="479" y="335" width="36" height="70" fill="#8e5430"/><rect x="516" y="335" width="36" height="70" fill="#8a502c"/><rect x="484" y="341" width="26" height="58" fill="#b27040"/><rect x="487" y="344" width="20" height="52" fill="#7c4424"/><rect x="491" y="344" width="3" height="52" fill="#8c5030"/><rect x="521" y="341" width="26" height="58" fill="#b27040"/><rect x="524" y="344" width="20" height="52" fill="#7c4424"/><rect x="528" y="344" width="3" height="52" fill="#8c5030"/><rect x="505" y="356" width="7" height="28" rx="2" fill="#3e3018"/><rect x="507.5" y="360" width="2" height="20" fill="#8a7a40"/><circle cx="508.5" cy="359.5" r="2.2" fill="#a09048"/><circle cx="508.5" cy="380.5" r="2.2" fill="#a09048"/><circle cx="508.5" cy="370" r="1.5" fill="#b0a050"/><rect x="519" y="356" width="7" height="28" rx="2" fill="#3e3018"/><rect x="521.5" y="360" width="2" height="20" fill="#8a7a40"/><circle cx="522.5" cy="359.5" r="2.2" fill="#a09048"/><circle cx="522.5" cy="380.5" r="2.2" fill="#a09048"/><circle cx="522.5" cy="370" r="1.5" fill="#b0a050"/><rect x="466.5" y="318.5" width="97" height="96" fill="none" stroke="#f4f4f4" stroke-width="1.3" stroke-dasharray="3.5 2.5"/></svg><div class="a" style="left:285px;top:681px;width:40px;height:28px;background:#35383b;border:1px solid #1e2022"></div><div class="t" style="left:285px;top:688.8px;width:40px;text-align:center;font-size:15px;color:#d8d8d8;letter-spacing:0.8px;padding-left:0.8px">1/2</div><div class="a" style="left:325px;top:681px;width:40px;height:28px;background:#35383b;border:1px solid #1e2022"></div><div class="t" style="left:325px;top:688.8px;width:40px;text-align:center;font-size:15px;color:#d8d8d8;">x1</div><div class="a" style="left:365px;top:681px;width:40px;height:28px;background:#484b4e;border:none"></div><div class="t" style="left:365px;top:688.8px;width:40px;text-align:center;font-size:15px;color:#d8d8d8;">x2</div><div class="a" style="left:405px;top:681px;width:40px;height:28px;background:#35383b;border:1px solid #1e2022"></div><div class="t" style="left:405px;top:688.8px;width:40px;text-align:center;font-size:15px;color:#d8d8d8;">x4</div><div class="a" style="left:445px;top:681px;width:40px;height:28px;background:#35383b;border:1px solid #1e2022"></div><div class="t" style="left:445px;top:688.8px;width:40px;text-align:center;font-size:15px;color:#d8d8d8;">x8</div><div class="a" style="left:485px;top:681px;width:40px;height:28px;background:#35383b;border:1px solid #1e2022"></div><div class="t" style="left:485px;top:688.8px;width:40px;text-align:center;font-size:15px;color:#d8d8d8;">x16</div><div class="a" style="left:861px;top:46px;width:1px;height:675px;background:#1a1c1e"></div><div class="a" style="left:275px;top:719px;width:586px;height:2px;background:#1a1c1e"></div><div class="a" style="left:862px;top:46px;width:340px;height:675px;background:#2e3134"></div><div class="a" style="left:873px;top:56px;width:318px;height:239px;background:#3f4245;border:1px solid #26292b;border-radius:6px"></div><div class="t" style="left:878px;top:62.3px;font-size:15px;font-weight:bold;color:#d4d4d4">Color Picker</div><div class="a" style="left:882px;top:82px;width:274px;height:154px;background:linear-gradient(to top,#000,rgba(0,0,0,0)),linear-gradient(to right,#fff,#f00)"></div><div class="a" style="left:1166px;top:84px;width:16px;height:152px;background:linear-gradient(#f00 0%,#f0f 17%,#00f 33%,#0ff 50%,#0f0 67%,#ff0 83%,#f00 100%)"></div><div class="a" style="left:1165px;top:80px;width:18px;height:5px;border:1.5px solid #fff;background:#600"></div><div class="a" style="left:882px;top:247px;width:300px;height:1px;background:#2a2d30"></div><div class="a" style="left:882px;top:261px;width:27px;height:27px;background:#000;border:2px solid #fff"></div><div class="a" style="left:926px;top:260px;width:28px;height:28px;background:#000"></div><div class="a" style="left:958px;top:260px;width:28px;height:28px;background:#000"></div><div class="a" style="left:990px;top:260px;width:28px;height:28px;background:#000"></div><div class="a" style="left:1022px;top:260px;width:28px;height:28px;background:#000"></div><div class="a" style="left:1054px;top:260px;width:28px;height:28px;background:#000"></div><div class="a" style="left:1086px;top:260px;width:28px;height:28px;background:#000"></div><div class="a" style="left:1118px;top:260px;width:28px;height:28px;background:#000"></div><div class="a" style="left:1150px;top:260px;width:28px;height:28px;background:#000"></div><div class="a" style="left:894px;top:427px;width:157px;height:157px;background:radial-gradient(circle at 50% 40%,#5d6063,#52555a);border:1px solid #1b1d1f;border-radius:50%"></div><div class="a" style="left:1073px;top:487px;width:98px;height:98px;background:radial-gradient(circle at 50% 40%,#5d6063,#52555a);border:1px solid #1b1d1f;border-radius:50%"></div><div class="a" style="left:933px;top:590px;width:77px;height:24px;background:linear-gradient(#5c5f62,#53565a);border:1px solid #1c1e20;border-radius:3px"></div><div class="t" style="left:941.4px;top:595.3px;font-size:15px;color:#c4c4c4">1px</div><div class="a" style="left:995px;top:600px;width:0;height:0;border-left:4px solid transparent;border-right:4px solid transparent;border-top:5px solid #e8e8e8"></div><div class="a" style="left:1083px;top:590px;width:77px;height:24px;background:linear-gradient(#5c5f62,#53565a);border:1px solid #1c1e20;border-radius:3px"></div><div class="t" style="left:1092.3px;top:595px;font-size:15px;color:#c4c4c4">1px</div><div class="a" style="left:1145px;top:600px;width:0;height:0;border-left:4px solid transparent;border-right:4px solid transparent;border-top:5px solid #e8e8e8"></div><div class="a" style="left:886px;top:628px;width:292px;height:1px;background:#4a4d50"></div><div class="a" style="left:888px;top:641px;width:62px;height:62px;background:#5b5e61;border:1px solid #1a1c1e;border-radius:3px"></div><div class="a" style="left:1032px;top:641px;width:62px;height:62px;background:#5b5e61;border:1px solid #1a1c1e;border-radius:3px"></div><div class="a" style="left:1116px;top:641px;width:62px;height:62px;background:#5b5e61;border:1px solid #1a1c1e;border-radius:3px"></div><svg class="a" style="left:0;top:0" width="1202" height="721" viewBox="0 0 1202 721"><defs>
<radialGradient id="shd"><stop offset="0" stop-color="#000" stop-opacity="0.75"/><stop offset="0.6" stop-color="#000" stop-opacity="0.4"/><stop offset="1" stop-color="#000" stop-opacity="0"/></radialGradient>
<linearGradient id="pbody" x1="0" y1="0" x2="1" y2="0"><stop offset="0" stop-color="#c4c4c4"/><stop offset="0.12" stop-color="#a8a8a8"/><stop offset="0.4" stop-color="#9a9898"/><stop offset="0.55" stop-color="#6a6868"/><stop offset="1" stop-color="#3e3a3b"/></linearGradient>
<linearGradient id="pcone" x1="0" y1="0" x2="1" y2="0"><stop offset="0" stop-color="#e8e8e8"/><stop offset="0.5" stop-color="#ffffff"/><stop offset="1" stop-color="#9a9a9a"/></linearGradient>
<linearGradient id="gundo" x1="0" y1="0" x2="1" y2="0"><stop offset="0" stop-color="#18a838"/><stop offset="1" stop-color="#b8dc18"/></linearGradient>
<linearGradient id="gredo" x1="0" y1="0" x2="1" y2="0"><stop offset="0" stop-color="#2a8a38"/><stop offset="1" stop-color="#8aa818"/></linearGradient>
</defs><ellipse cx="978" cy="548" rx="48" ry="5" fill="url(#shd)"/><g transform="translate(932.5,550) rotate(28.6)"><polygon points="-10.5,-23 10.5,-23 0,0" fill="url(#pcone)"/><polygon points="-2,-4 2,-4 0,0" fill="#777"/><rect x="-10.5" y="-99" width="21" height="76" fill="url(#pbody)"/><rect x="-9" y="-109" width="18" height="10" fill="#f0f0f0"/><rect x="-9" y="-101" width="18" height="3" fill="#9a9a9a"/><rect x="-7" y="-114" width="14" height="6" fill="#e0e0e0"/></g><ellipse cx="1124" cy="559" rx="30" ry="5" fill="url(#shd)"/><polygon points="1099,538 1117,503 1142,512 1124,547.5" fill="#1d5a72"/><polygon points="1142,512 1144,517.5 1128,550 1124,547.5" fill="#0d3048"/><polygon points="1124,505.5 1135,510 1115.5,544.3 1107.7,541" fill="#f2f2f2"/><text x="0" y="0" font-family="Liberation Sans" font-weight="bold" font-size="6.2" fill="#1a3a4a" transform="translate(1114.5,540.5) rotate(-62)">RPG MAKER</text><polygon points="1096.5,540 1124.3,546.8 1127.5,550 1121,562 1095.5,554.3" fill="#e4e4dc"/><polygon points="1096.5,540 1124.3,546.8 1127.5,550 1122,551 1096,545" fill="#f6f6f2"/><ellipse cx="918" cy="686" rx="16" ry="2.5" fill="url(#shd)" opacity="0.6"/><path d="M899.5,677.5 L904,657.5 L909,661.5 C918,655 932,656 936,668 C938,675 933,682 929,685.5 C932,677 929,667 921,666 C916,665.5 912,668 910,670 L918.5,671 Z" fill="url(#gundo)"/><ellipse cx="995" cy="686" rx="16" ry="2.5" fill="url(#shd)" opacity="0.6"/><g transform="translate(1908,0) scale(-1,1)"><path d="M899.5,677.5 L904,657.5 L909,661.5 C918,655 932,656 936,668 C938,675 933,682 929,685.5 C932,677 929,667 921,666 C916,665.5 912,668 910,670 L918.5,671 Z" fill="url(#gredo)" opacity="0.8"/></g><ellipse cx="1072" cy="686" rx="16" ry="2.5" fill="url(#shd)" opacity="0.6"/><g transform="translate(1059,684) rotate(-118)"><rect x="0" y="-7.5" width="24" height="8" fill="#d02020"/></g><g transform="translate(1059,684) rotate(-99)"><rect x="0" y="-7.5" width="24" height="8" fill="#e8c820"/></g><g transform="translate(1059,684) rotate(-81)"><rect x="0" y="-7.5" width="24" height="8" fill="#80c030"/></g><g transform="translate(1059,684) rotate(-63)"><rect x="0" y="-7.5" width="24" height="8" fill="#2090d8"/></g><g transform="translate(1059,684) rotate(-45)"><rect x="0" y="-7.5" width="24" height="8" fill="#7040b0"/></g><g transform="translate(1059,684) rotate(-24)"><rect x="0" y="-7.5" width="24" height="8" fill="#ffffff"/></g><g transform="translate(1059,684) rotate(-24)"><rect x="18.5" y="-5.5" width="3" height="3" fill="#c02030"/><rect x="20.5" y="-5.5" width="2" height="3" fill="#30b0a0"/></g><ellipse cx="1147" cy="688" rx="18" ry="2.5" fill="url(#shd)" opacity="0.6"/><rect x="1133" y="658" width="29" height="29" fill="#3a3a3a"/><rect x="1138" y="658" width="20" height="10.5" fill="#e8e8e8"/><rect x="1153" y="661" width="3" height="6" fill="#444"/><rect x="1138" y="673" width="20" height="13" fill="#f0f0f0"/><rect x="1138" y="673" width="20" height="3.5" fill="#8cc030"/><rect x="1140" y="679.5" width="16" height="0.7" fill="#bbb"/><rect x="1140" y="682.5" width="16" height="0.7" fill="#bbb"/></svg><div class="a" style="left:862px;top:719px;width:340px;height:2px;background:#1a1c1e"></div><div class="a" style="left:1201px;top:46px;width:1px;height:675px;background:#1a1c1e"></div></body></html>
